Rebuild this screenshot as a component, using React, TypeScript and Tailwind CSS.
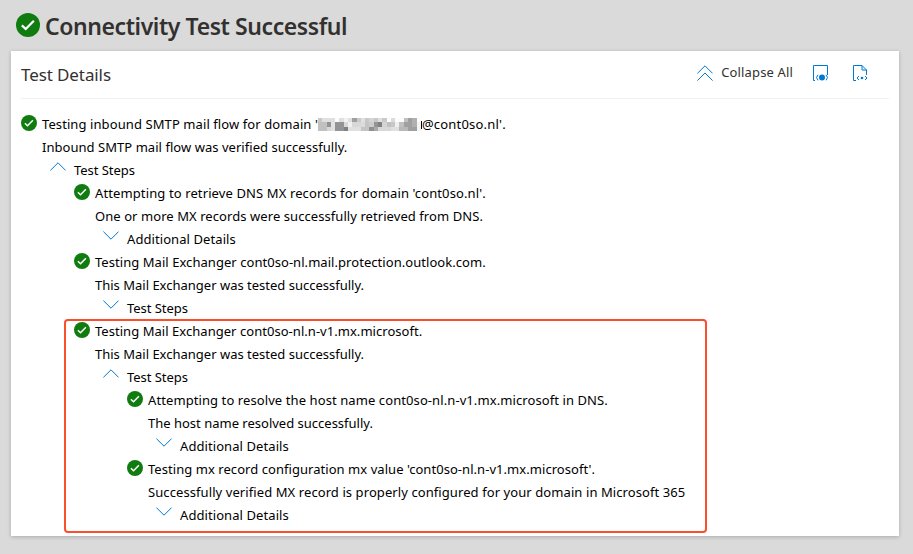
import React from "react";

function Check({ size }: { size: number }) {
  return (
    <svg width={size} height={size} viewBox="0 0 16 16" className="block shrink-0">
      <circle cx="8" cy="8" r="8" fill="#107c10" />
      <path d="M3.9 8.3 L6.5 10.7 L11.9 5.2" fill="none" stroke="#fff" strokeWidth="1.5" />
    </svg>
  );
}

function Chevron({ open }: { open?: boolean }) {
  return (
    <svg width="16" height="9" viewBox="0 0 16 9" className="block shrink-0">
      <path d={open ? "M0.4 8.4 L8 0.8 L15.6 8.4" : "M0.4 0.6 L8 8.2 L15.6 0.6"} fill="none" stroke="#0078d4" strokeWidth="1" />
    </svg>
  );
}

const shades = [
  "c8 e0 e0 e0 fc e0 f2 e0 a0 ca e0 c8 d4 c8 e0 ca fc dc fc fc c0 a0 b0 fc",
  "c0 c0 94 e4 94 94 d8 f0 d8 d8 dc c4 cc 94 80 d4 c0 c8 f0 c0 a0 a0 b0 f4",
  "c0 c0 d8 e0 94 94 80 e0 e0 e0 c4 c4 90 a8 d8 d8 d8 e0 e0 b8 b8 a0 a0 f4",
];

function Redacted() {
  return (
    <span className="grid h-[13px] w-[103px] grid-cols-24 grid-rows-3">
      {shades.flatMap((row, y) =>
        row.split(" ").map((s, x) => <i key={y + "-" + x} style={{ backgroundColor: "#" + s + s + s }} />),
      )}
    </span>
  );
}

type RowProps = { kind: "check" | "text" | "open" | "closed"; indent: string; track: string; children: React.ReactNode };

function Row({ kind, indent, track, children }: RowProps) {
  const toggle = kind === "open" || kind === "closed";
  return (
    <div className={"flex h-[23px] items-start " + indent}>
      {kind === "check" && <div className="mr-[5px] mt-[2px]"><Check size={16} /></div>}
      {toggle && <div className="mr-2 mt-[3px]"><Chevron open={kind === "open"} /></div>}
      <div className={"flex items-center whitespace-pre leading-[23px] " + track}>{children}</div>
    </div>
  );
}

export default function App() {
  return (
    <div className="h-[554px] w-[913px] overflow-hidden bg-[#dadada] font-['Noto_Sans',sans-serif] text-[13px] text-black">
      <header className="flex h-[51px] items-start pl-4 text-[#323130]">
        <div className="mt-[13px]"><Check size={24} /></div>
        <h1 className="ml-[5px] mt-[10px] whitespace-nowrap text-[23px] font-semibold leading-[32px] tracking-[-0.42px]">Connectivity Test Successful</h1>
      </header>
      <main className="ml-[11px] h-[485px] w-[888px] bg-white px-[10px] shadow-[0_1px_4px_rgba(0,0,0,0.22)]">
        <div className="flex h-[48px] items-center border-b border-[#f0f0f0] text-[#323130]">
          <h2 className="whitespace-nowrap text-[17px] tracking-[-0.1px]">Test Details</h2>
          <div className="-mt-[3px] ml-auto flex items-center pr-[20px]">
            <svg width="16" height="16" viewBox="0 0 16 16" fill="none" stroke="#0078d4"><path d="M0.4 8.4 L8 0.8 L15.6 8.4 M0.4 15.6 L8 8 L15.6 15.6" /></svg>
            <span className="ml-2 whitespace-nowrap tracking-[0.15px]">Collapse All</span>
            <svg className="ml-5" width="16" height="16" viewBox="0 0 16 16" fill="none" stroke="#0078d4"><path d="M2 15.5 H.5 V.5 H14.5 V10" /><circle cx="9" cy="12.5" r="3" fill="#0078d4" stroke="none" /><path d="M5 9.8 Q2 12.5 5 15.3 M13 9.8 Q16 12.5 13 15.3" /></svg>
            <svg className="ml-6" width="16" height="16" viewBox="0 0 16 16" fill="none" stroke="#0078d4"><path d="M3 15.5 H.5 V.5 H9 L13.5 5 V10 M9 .5 V5 H13.5 M6 11 L4 13 L6 15 M12 11 L14 13 L12 15" /><circle cx="9" cy="13" r="1.3" fill="#0078d4" stroke="none" /></svg>
          </div>
        </div>
        <div className="pt-[14px]">
          <Row kind="check" indent="pl-0" track="tracking-[0.09px]">
            <span>Testing inbound SMTP mail flow for domain '</span>
            <Redacted />
            <span className="mt-px h-[8px] w-px bg-black" />
            <span className="tracking-[0.2px]">@cont0so.nl'.</span>
          </Row>
          <Row kind="text" indent="pl-[21px]" track="tracking-[0.04px]">Inbound SMTP mail flow was verified successfully.</Row>
          <Row kind="open" indent="pl-[29px]" track="tracking-[-0.05px]">Test Steps</Row>
          <Row kind="check" indent="pl-[53px]" track="tracking-[0.115px]">Attempting to retrieve DNS MX records for domain 'cont0so.nl'.</Row>
          <Row kind="text" indent="pl-[74px]" track="tracking-[0.07px]">One or more MX records were successfully retrieved from DNS.</Row>
          <Row kind="closed" indent="pl-[82px]" track="tracking-[0.08px]">Additional Details</Row>
          <Row kind="check" indent="pl-[53px]" track="tracking-[0.05px]">Testing Mail Exchanger cont0so-nl.mail.protection.outlook.com.</Row>
          <Row kind="text" indent="pl-[74px]" track="">This Mail Exchanger was tested successfully.</Row>
          <Row kind="closed" indent="pl-[82px]" track="tracking-[-0.05px]">Test Steps</Row>
          <section className="relative">
            <div className="absolute -top-[1px] left-[43px] h-[214px] w-[643px] rounded-[4px] border-2 border-[#fa4f2c]" />
            <Row kind="check" indent="pl-[53px]" track="tracking-[0.04px]">Testing Mail Exchanger cont0so-nl.n-v1.mx.microsoft.</Row>
            <Row kind="text" indent="pl-[74px]" track="">This Mail Exchanger was tested successfully.</Row>
            <Row kind="open" indent="pl-[82px]" track="tracking-[-0.05px]">Test Steps</Row>
            <Row kind="check" indent="pl-[106px]" track="tracking-[0.09px]">Attempting to resolve the host name cont0so-nl.n-v1.mx.microsoft in DNS.</Row>
            <Row kind="text" indent="pl-[127px]" track="">The host name resolved successfully.</Row>
            <Row kind="closed" indent="pl-[135px]" track="tracking-[0.08px]">Additional Details</Row>
            <Row kind="check" indent="pl-[106px]" track="tracking-[0.05px]">Testing mx record configuration mx value 'cont0so-nl.n-v1.mx.microsoft'.</Row>
            <Row kind="text" indent="pl-[127px]" track="tracking-[0.085px]">Successfully verified MX record is properly configured for your domain in Microsoft 365</Row>
            <Row kind="closed" indent="pl-[135px]" track="tracking-[0.08px]">Additional Details</Row>
          </section>
        </div>
      </main>
    </div>
  );
}
